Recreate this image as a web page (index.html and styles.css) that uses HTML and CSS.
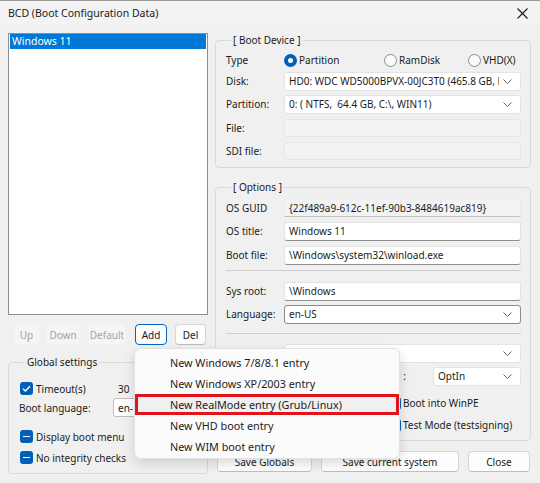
FILE: index.html
```html
<!DOCTYPE html>
<html>
<head>
<meta charset="utf-8">
<link rel="stylesheet" href="styles.css">
</head>
<body>
<div class="window">
  <div class="titlebar">
    <span class="title">BCD (Boot Configuration Data)</span>
    <svg class="close" width="11" height="11" viewBox="0 0 11 11"><path d="M0.5 0.5 L10.5 10.5 M10.5 0.5 L0.5 10.5" stroke="#1b1b1b" stroke-width="1.1" fill="none"/></svg>
  </div>
  <div class="main">
    <div class="left">
      <div class="listbox"><div class="item sel">Windows 11</div></div>
      <div class="btnrow">
        <span class="btn dis b-up">Up</span>
        <span class="btn dis b-down">Down</span>
        <span class="btn dis b-def">Default</span>
        <span class="btn focus b-add">Add</span>
        <span class="btn b-del">Del</span>
      </div>
      <fieldset class="group global">
        <legend>Global settings</legend>
        <div class="grow timeout">
          <span class="chk on"><svg width="13" height="13" viewBox="0 0 13 13"><path d="M3 6.8 L5.4 9.1 L10 4.2" stroke="#fff" stroke-width="1.4" fill="none"/></svg></span>
          <span class="tlabel">Timeout(s)</span>
          <span class="field gfield plain">30</span>
        </div>
        <div class="grow">
          <span class="blabel">Boot language:</span>
          <span class="field gfield select">en-</span>
        </div>
        <div class="grow chkrow first"><span class="chk ind"><i></i></span>Display boot menu</div>
        <div class="grow chkrow"><span class="chk ind"><i></i></span>No integrity checks</div>
      </fieldset>
    </div>
    <div class="right">
      <fieldset class="group device">
        <legend>[ Boot Device ]</legend>
        <div class="frow r-type">
          <span class="lbl">Type</span>
          <div class="radios">
            <span class="ropt o1"><span class="radio on"></span>Partition</span>
            <span class="ropt o2"><span class="radio"></span>RamDisk</span>
            <span class="ropt o3"><span class="radio"></span>VHD(X)</span>
          </div>
        </div>
        <div class="frow r-disk">
          <span class="lbl">Disk:</span>
          <span class="field select"><span class="txt">HD0: WDC WD5000BPVX-00JC3T0 (465.8 GB, MBR)</span><svg class="chev" width="9" height="5" viewBox="0 0 9 5"><path d="M0.5 0.5 L4.5 4.5 L8.5 0.5" stroke="#606060" stroke-width="1" fill="none"/></svg></span>
        </div>
        <div class="frow r-part">
          <span class="lbl">Partition:</span>
          <span class="field select"><span class="txt">0: ( NTFS,&nbsp; 64.4 GB, C:\, WIN11)</span><svg class="chev" width="9" height="5" viewBox="0 0 9 5"><path d="M0.5 0.5 L4.5 4.5 L8.5 0.5" stroke="#606060" stroke-width="1" fill="none"/></svg></span>
        </div>
        <div class="frow r-file">
          <span class="lbl">File:</span>
          <span class="field disabled"></span>
        </div>
        <div class="frow r-sdi">
          <span class="lbl">SDI file:</span>
          <span class="field disabled"></span>
        </div>
      </fieldset>
      <fieldset class="group options">
        <legend>[ Options ]</legend>
        <div class="frow o-guid">
          <span class="lbl">OS GUID</span>
          <span class="field readonly">{22f489a9-612c-11ef-90b3-8484619ac819}</span>
        </div>
        <div class="frow o-title">
          <span class="lbl">OS title:</span>
          <span class="field edit">Windows 11</span>
        </div>
        <div class="frow o-boot">
          <span class="lbl">Boot file:</span>
          <span class="field edit">\Windows\system32\winload.exe</span>
        </div>
        <div class="sep s1"></div>
        <div class="frow o-root">
          <span class="lbl">Sys root:</span>
          <span class="field edit">\Windows</span>
        </div>
        <div class="frow o-lang">
          <span class="lbl">Language:</span>
          <span class="field select active"><span class="txt">en-US</span><svg class="chev" width="9" height="5" viewBox="0 0 9 5"><path d="M0.5 0.5 L4.5 4.5 L8.5 0.5" stroke="#606060" stroke-width="1" fill="none"/></svg></span>
        </div>
        <div class="sep s2"></div>
        <div class="frow o-pae">
          <span class="lbl"></span>
          <span class="field select"><span class="txt"></span><svg class="chev" width="9" height="5" viewBox="0 0 9 5"><path d="M0.5 0.5 L4.5 4.5 L8.5 0.5" stroke="#606060" stroke-width="1" fill="none"/></svg></span>
        </div>
        <div class="nxrow">
          <span class="nxlbl">:</span>
          <span class="field select nx"><span class="txt">OptIn</span><svg class="chev" width="9" height="5" viewBox="0 0 9 5"><path d="M0.5 0.5 L4.5 4.5 L8.5 0.5" stroke="#606060" stroke-width="1" fill="none"/></svg></span>
        </div>
        <div class="crow c1">
          <span class="copt"><span class="chk ind"><i></i></span></span>
          <span class="copt"><span class="chk ind"><i></i></span>Boot into WinPE</span>
        </div>
        <div class="crow c2">
          <span class="copt"><span class="chk ind"><i></i></span></span>
          <span class="copt"><span class="chk ind"><i></i></span>Test Mode (testsigning)</span>
        </div>
      </fieldset>
      <div class="actions">
        <span class="btn a-globals">Save Globals</span>
        <span class="btn a-current">Save current system</span>
        <span class="btn a-close">Close</span>
      </div>
    </div>
  </div>
  <div class="menu">
    <div class="mitem">New Windows 7/8/8.1 entry</div>
    <div class="mitem">New Windows XP/2003 entry</div>
    <div class="mitem hot">New RealMode entry (Grub/Linux)</div>
    <div class="mitem">New VHD boot entry</div>
    <div class="mitem">New WIM boot entry</div>
  </div>
</div>
</body>
</html>
```

FILE: styles.css
```css
* { box-sizing: border-box; }
html, body { margin: 0; padding: 0; }
body {
  width: 540px;
  height: 483px;
  overflow: hidden;
  background: #f0f0f0;
  font-family: "Noto Sans", "Open Sans", sans-serif;
  font-size: 10px;
  line-height: 14px;
  color: #1b1b1b;
}
.window {
  position: relative;
  width: 540px;
  height: 483px;
  background: #f0f0f0;
  border-top: 1px solid #9c9c9c;
}
.titlebar {
  height: 24px;
  display: flex;
  align-items: center;
  justify-content: space-between;
  padding: 0 12px 0 8px;
  background: #f3f3f3;
}
.title { font-size: 10.5px; }
.close { display: block; }
.main {
  display: flex;
  gap: 7px;
  padding: 8px 9px 0 8px;
}
.left { width: 200px; display: flex; flex-direction: column; }
.right { width: 316px; display: flex; flex-direction: column; }

.listbox {
  height: 282px;
  background: #fff;
  border: 1px solid #8e8e8e;
  padding: 0 1px;
}
.item { height: 15px; line-height: 15px; padding-left: 2px; font-size: 10.5px; }
.item.sel { background: #0078d7; color: #fff; }

.btn {
  display: inline-flex;
  align-items: center;
  justify-content: center;
  height: 21px;
  background: #fdfdfd;
  border: 1px solid #d6d6d6;
  border-bottom-color: #bdbdbd;
  border-radius: 4px;
  white-space: nowrap;
}
.btn.dis { color: #a3a3a3; background: #f5f5f5; border-color: #f3f3f3; }
.btn.focus { border: 1px solid #0067c0; }
.btnrow { display: flex; margin-top: 9px; padding-left: 5px; }
.b-up { width: 27px; }
.b-down { width: 34px; margin-left: 6px; }
.b-def { width: 38px; margin-left: 8px; }
.b-add { width: 32px; margin-left: 9px; }
.b-del { width: 31px; margin-left: 8px; }

.group {
  margin: 0;
  border: 1px solid #dadada;
  border-radius: 4px;
  min-width: 0;
}
.group legend { padding: 0 2px; margin-left: 5px; line-height: 16px; }

.global { margin-top: 9px; height: 120px; padding: 9px 8px 0 11px; }
.grow { display: flex; align-items: center; height: 19px; }
.chk {
  flex: none;
  width: 13px;
  height: 13px;
  border-radius: 3px;
  background: #005fb8;
  display: flex;
  align-items: center;
  justify-content: center;
}
.chk svg { display: block; }
.chk i { display: block; width: 7px; height: 1.5px; background: #fff; }
.tlabel { width: 77px; margin-left: 3px; }
.blabel { width: 94px; margin-left: -1px; }
.field {
  display: flex;
  align-items: center;
  height: 19px;
  padding-left: 4px;
  background: #fff;
  border: 1px solid #e3e3e3;
  border-radius: 3px;
  white-space: nowrap;
  overflow: hidden;
}
.gfield { width: 80px; }
.gfield.plain { background: transparent; border-color: transparent; }
.gfield.select { border-color: #bdbdbd; }
.chkrow { gap: 3px; }
.chkrow.first { margin-top: 10px; }
.chkrow + .chkrow { margin-top: 2px; }

.device { margin-top: -1px; height: 136px; padding: 2px 9px 0 10px; }
.frow { display: flex; align-items: center; height: 20px; }
.lbl { width: 58px; flex: none; }
.frow .field { flex: 1; }
.r-disk { margin-top: 1px; }
.r-part { margin-top: 3px; }
.r-file, .r-sdi { margin-top: 4px; height: 19px; }
.field.disabled { background: #f3f3f3; border-color: #e6e6e6; height: 18px; }
.radios { display: flex; align-items: center; }
.ropt { display: flex; align-items: center; gap: 2px; }
.o1 { width: 100px; }
.o2 { width: 84px; }
.radio {
  width: 13px;
  height: 13px;
  border-radius: 50%;
  border: 1px solid #8a8a8a;
  background: #fafafa;
  flex: none;
}
.radio.on { border: 4px solid #005fb8; background: #fff; }
.select { justify-content: space-between; padding-right: 8px; }
.select .txt { overflow: hidden; white-space: nowrap; flex: 1; min-width: 0; }
.select .chev { flex: none; margin-left: 4px; }
.active { border-color: #8a8a8a; }

.options { margin-top: 11px; height: 262px; padding: 3px 9px 0 10px; }
.field.readonly { background: #f2f2f2; border-color: #ececec; border-bottom-color: #c2c2c2; border-radius: 0; height: 18px; }
.field.edit { border-bottom-color: #8f8f8f; }
.o-title { margin-top: 3px; }
.o-boot { margin-top: 4px; }
.sep { border-top: 1px solid #cdcdcd; margin: 5px 0 0 0; height: 0; }
.s1 + .frow { margin-top: 10px; }
.o-lang { margin-top: 3px; }
.s2 { margin-top: 9px; }
.o-pae { margin-top: 9px; }
.nxrow { display: flex; align-items: center; height: 20px; margin-top: 3px; }
.nxlbl { flex: 1; text-align: right; padding-right: 27px; white-space: nowrap; }
.field.nx { width: 88px; flex: none; }
.crow { display: grid; grid-template-columns: 162px 1fr; height: 18px; align-items: center; }
.c1 { margin-top: 8px; }
.c2 { margin-top: 4px; }
.copt { display: flex; align-items: center; gap: 2px; white-space: nowrap; }

.actions { display: flex; margin-top: 10px; padding-left: 2px; }
.a-globals { width: 95px; }
.a-current { width: 138px; margin-left: 9px; }
.a-close { width: 62px; margin-left: 9px; }

.menu {
  position: absolute;
  left: 134px;
  top: 347px;
  width: 266px;
  height: 111px;
  background: #fbfbfb;
  border: 1px solid #e2e2e2;
  border-radius: 7px;
  box-shadow: 0 4px 12px rgba(0, 0, 0, 0.14);
  padding-top: 3px;
  font-size: 10.8px;
}
.mitem { height: 21px; line-height: 21px; padding-left: 35px; white-space: nowrap; }
.mitem.hot { background: #f0f0f0; box-shadow: inset 0 0 0 3px #e1141c; }
```
